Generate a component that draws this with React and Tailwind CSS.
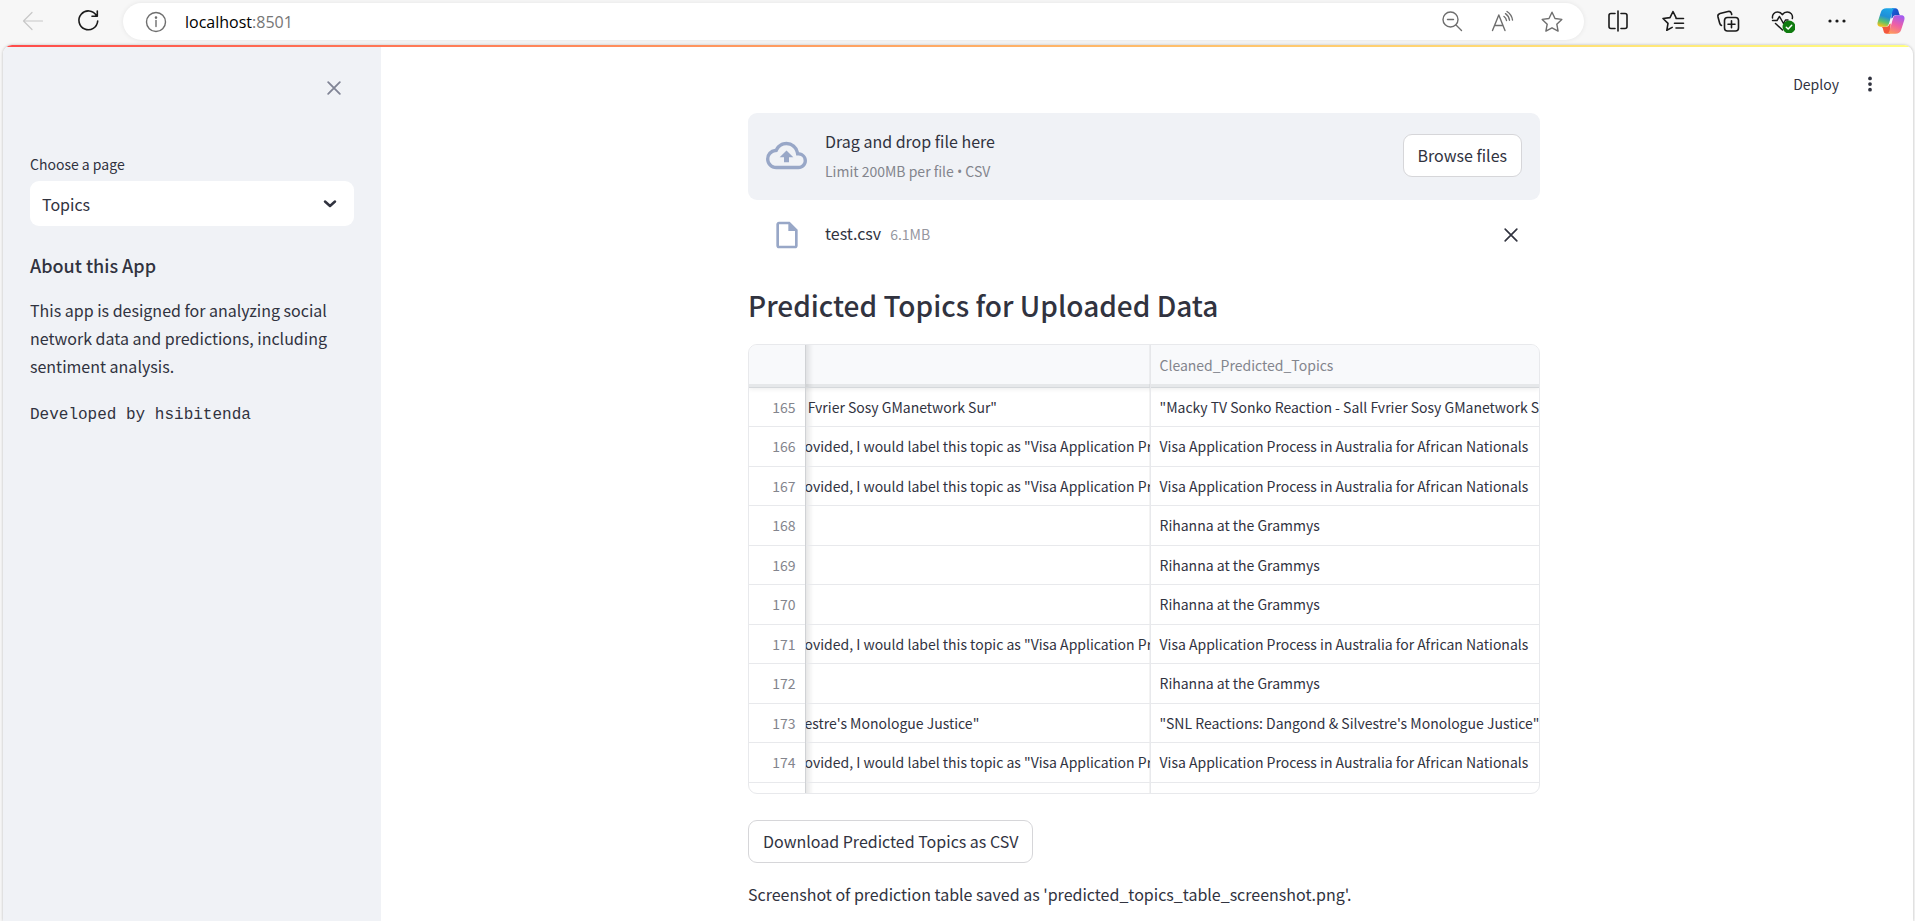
import React from "react";

const UI = "font-['Noto_Sans_CJK_SC','Noto_Sans',sans-serif]";

const LABEL = 'ovided, I would label this topic as "Visa Application Process"';
const VISA = "Visa Application Process in Australia for African Nationals";
const RIHANNA = "Rihanna at the Grammys";

const rows = [
  [165, ' Fvrier Sosy GManetwork Sur"', '"Macky TV Sonko Reaction - Sall Fvrier Sosy GManetwork Sur"'],
  [166, LABEL, VISA],
  [167, LABEL, VISA],
  [168, "", RIHANNA],
  [169, "", RIHANNA],
  [170, "", RIHANNA],
  [171, LABEL, VISA],
  [172, "", RIHANNA],
  [173, 'estre\'s Monologue Justice"', '"SNL Reactions: Dangond & Silvestre\'s Monologue Justice"'],
  [174, LABEL, VISA],
];

function Icon({ children, className = "size-6", sw = 1.2 }) {
  return (
    <svg viewBox="0 0 24 24" fill="none" stroke="currentColor" strokeWidth={sw} strokeLinecap="round" strokeLinejoin="round" className={className} aria-hidden="true">
      {children}
    </svg>
  );
}

const STAR = "M12 2.2l3 6.300 6.800.9-5 4.800 1.300 6.900L12 17.800l-6.100 3.300 1.300-6.900-5-4.800 6.800-.9z";

function Copilot() {
  return (
    <svg viewBox="0 0 28 28" className="size-7" aria-hidden="true">
      <defs>
        <linearGradient id="cpA" x1="0.6" y1="0" x2="0.3" y2="1">
          <stop offset="0" stopColor="#1ea7e8" />
          <stop offset="0.45" stopColor="#1f8fd8" />
          <stop offset="0.75" stopColor="#5fc26a" />
          <stop offset="1" stopColor="#f2c01c" />
        </linearGradient>
        <linearGradient id="cpB" x1="0.7" y1="0" x2="0.3" y2="1">
          <stop offset="0" stopColor="#a45cf0" />
          <stop offset="0.5" stopColor="#ee5fa6" />
          <stop offset="1" stopColor="#ff9a5c" />
        </linearGradient>
        <linearGradient id="cpC" x1="0" y1="0" x2="1" y2="0.6">
          <stop offset="0" stopColor="#1d63e0" />
          <stop offset="1" stopColor="#1745b8" />
        </linearGradient>
      </defs>
      <path d="M15 1.200h3.500c1.500 0 2.400 1 2.800 2.300l.9 3.200c.3 1 1 1.600 2 1.600h-5.500c-1.500 0-2.400.8-2.900 2.200l-1.500 1z" fill="url(#cpC)" />
      <path d="M13 26.800H9.500c-1.500 0-2.400-1-2.800-2.300l-.9-3.200c-.3-1-1-1.600-2-1.600h5.500c1.500 0 2.400-.8 2.900-2.200l1.500-1z" fill="#f4573c" />
      <path d="M9.500 1.200h9c-1.500 0-2.300 1-2.800 2.500L12 16.500c-.6 2-1.700 3.200-3.700 3.200H3.500C.8 19.700 0 17.500.7 15L4 4.700C4.800 2.400 6.500 1.200 9.500 1.200z" fill="url(#cpA)" />
      <path d="M18.500 26.800h-9c1.500 0 2.300-1 2.800-2.500L16 11.500c.6-2 1.700-3.200 3.700-3.200h4.800c2.700 0 3.500 2.200 2.800 4.700L24 23.300c-.8 2.300-2.500 3.500-5.500 3.500z" fill="url(#cpB)" />
    </svg>
  );
}

function BrowserBar() {
  return (
    <header className="flex h-[45px] shrink-0 items-start bg-[#f7f7f7] pr-2.5 text-[#1b1b1b]">
      <div className="flex h-[42px] items-center gap-8 pl-[21px]">
        <button aria-label="Back" disabled className="text-[#c8c8c8]">
          <Icon><path d="M21.500 12H2.500M11 3.500L2.500 12l8.500 8.500" /></Icon>
        </button>
        <button aria-label="Reload">
          <Icon sw={1.6}><path d="M19.400 6.500A9.400 9.400 0 1 0 20.700 12M20.300 2v5.300H15" /></Icon>
        </button>
      </div>
      <div className="mt-[3px] ml-[22px] flex h-[37px] min-w-0 flex-1 items-center rounded-full bg-white pr-5 pl-[21px] text-[#6e6e6e] shadow-[0_0_5px_rgba(0,0,0,0.08)]">
        <button aria-label="Site information">
          <Icon sw={1.4}><circle cx="12" cy="12" r="9.500" /><path d="M12 10.500v6" /><circle cx="12" cy="7.600" r=".6" fill="currentColor" /></Icon>
        </button>
        <div className="ml-[17px] flex-1 font-['Open_Sans',sans-serif] text-[16px] leading-6 text-[#767676]"><span className="text-black">localhost</span>:8501</div>
        <div className="flex items-center gap-[26px]">
          <button aria-label="Zoom out"><Icon sw={1.4}><circle cx="10.500" cy="9.500" r="7.500" /><path d="M16 15l5.500 5.500M7.500 9.500h6" /></Icon></button>
          <button aria-label="Read aloud"><Icon sw={1.4}><path d="M2.500 20.500L8.800 5 15 20.500M4.700 15.500h8.200M14 6.500a6 6 0 0 1 2.500 4M15.500 3.700a9.500 9.500 0 0 1 4 6.500M17 1.500a12 12 0 0 1 5.500 8.500" /></Icon></button>
          <button aria-label="Add to favorites"><Icon sw={1.4}><path d={STAR} /></Icon></button>
        </div>
      </div>
      <div className="flex h-[42px] items-center gap-[31px] pl-[22px]">
        <button aria-label="Split screen"><Icon sw={1.6}><path d="M12 2v20M9 4.500H5a2 2 0 0 0-2 2v11a2 2 0 0 0 2 2h4M15 4.500h4a2 2 0 0 1 2 2v11a2 2 0 0 1-2 2h-4" /></Icon></button>
        <button aria-label="Favorites"><Icon sw={1.6}><path d="M15 8.600L12 2.500 9 8.600l-7 .9 5 4.800-1.200 7 5.400-2.900M15 9.500h7.500M13.500 14.200h9M15 19h7.500" /></Icon></button>
        <button aria-label="Collections"><Icon sw={1.6}><rect x="8.500" y="8.500" width="14" height="13.500" rx="3" /><path d="M15.500 11.800v7M12 15.300h7M5.500 16.500c-1-.5-1.500-1.200-1.800-2.300L2 8C1.600 6.300 2.200 5 4 4.500l8-2c1.800-.4 2.900.3 3.400 1.800l.3 1.200" /></Icon></button>
        <button aria-label="Browser essentials">
          <Icon sw={1.5}><path d="M1.500 9C1 5.500 3.500 3 6.500 3c2.200 0 3.700 1 4.800 2.700C12.500 4 14 3 16.200 3c3.500 0 6 2.800 5.100 6.500M1.500 11.500H6L8.500 7.500l4 7 2-3.500H17M4.500 14.500l7 6.500" /><circle cx="18" cy="18" r="6.500" fill="#0f7b0f" stroke="none" /><path d="M15.300 18.200l1.900 1.800 3.500-3.700" stroke="#fff" /></Icon>
        </button>
        <button aria-label="Settings and more"><Icon><g fill="currentColor" stroke="none"><circle cx="4" cy="12" r="1.600" /><circle cx="11" cy="12" r="1.600" /><circle cx="18" cy="12" r="1.600" /></g></Icon></button>
        <button aria-label="Copilot" className="-ml-1"><Copilot /></button>
      </div>
    </header>
  );
}

function Sidebar() {
  return (
    <aside className="w-[378px] shrink-0 bg-[#f0f2f6] px-[27px] text-[#31333f]">
      <div className="flex justify-end pt-[31px] pr-[10px]">
        <button aria-label="Close sidebar" className="text-[#808495]"><Icon className="size-5" sw={2.2}><path d="M5 5l14 14M19 5L5 19" /></Icon></button>
      </div>
      <label htmlFor="page" className="mt-[54px] block text-[14px] leading-6">Choose a page</label>
      <div className="relative mt-[5px]">
        <select id="page" defaultValue="Topics" className="h-[45px] w-full appearance-none rounded-[9px] bg-white px-3 text-[16px] leading-6">
          <option>Topics</option>
        </select>
        <Icon className="pointer-events-none absolute top-[11px] right-3 size-6" sw={2.5}><path d="M7 9.500l5 4.500 5-4.500" /></Icon>
      </div>
      <h3 className="mt-[23px] text-[18px] leading-8 font-medium">About this App</h3>
      <p className="mt-[15px] text-[16px] leading-7">This app is designed for analyzing social network data and predictions, including sentiment analysis.</p>
      <p className="mt-[23px] font-['Liberation_Mono',monospace] text-[16px] leading-6">Developed by hsibitenda</p>
    </aside>
  );
}

function Uploader() {
  return (
    <section>
      <div className="flex h-[87px] items-center rounded-[9px] bg-[#f0f2f6] px-[18px] pb-0.5">
        <svg viewBox="0 0 24 24" fill="#98a7c7" className="size-[41px]" aria-hidden="true">
          <path d="M19.350 10.040A7.490 7.490 0 0 0 12 4C9.110 4 6.600 5.640 5.350 8.040A5.994 5.994 0 0 0 0 14c0 3.310 2.690 6 6 6h13c2.760 0 5-2.240 5-5 0-2.640-2.050-4.780-4.650-4.960zM19 18H6c-2.210 0-4-1.790-4-4 0-2.050 1.530-3.760 3.560-3.970l1.070-.11.5-.95A5.469 5.469 0 0 1 12 6c2.620 0 4.880 1.860 5.390 4.430l.3 1.500 1.530.11A2.980 2.980 0 0 1 22 15c0 1.650-1.350 3-3 3zM8 13h2.550v3h2.900v-3H16l-4-4z" />
        </svg>
        <div className="ml-[18px] flex-1">
          <div className="text-[16px] leading-7 text-[#31333f]">Drag and drop file here</div>
          <div className="mt-1 text-[14px] leading-6 text-[#83858d]">Limit 200MB per file <span className="font-['Open_Sans',sans-serif]">•</span> CSV</div>
        </div>
        <button className="h-[43px] rounded-[9px] border border-[#d6d6d9] bg-white px-3.5 pb-0.5 text-[16px] leading-6 text-[#31333f]">Browse files</button>
      </div>
      <div className="flex h-[70px] items-center pr-[19px] pl-[23px]">
        <svg viewBox="0 0 24 24" fill="#98a7c7" className="size-8" aria-hidden="true">
          <path d="M6 2c-1.100 0-1.990.9-1.990 2L4 20c0 1.100.89 2 1.990 2H18c1.100 0 2-.9 2-2V8l-6-6H6zm0 18V4h7v5h5v11H6z" />
        </svg>
        <div className="ml-[22px] flex flex-1 items-baseline gap-[9px] pb-1">
          <span className="text-[16px] leading-6 text-[#31333f]">test.csv</span>
          <span className="text-[14px] leading-6 text-[#96979f]">6.1MB</span>
        </div>
        <button aria-label="Remove test.csv" className="text-[#31333f]"><Icon className="size-5" sw={2}><path d="M5 5l14 14M19 5L5 19" /></Icon></button>
      </div>
    </section>
  );
}

function TopicsTable() {
  return (
    <div className="mt-[22px] h-[450px] overflow-hidden rounded-[9px] border border-[#e8e9ec]">
      <table className="w-full table-fixed border-collapse text-[14px] leading-6 text-[#31333f]">
        <colgroup><col className="w-[56px]" /><col className="w-[345px]" /><col /></colgroup>
        <thead>
          <tr className="h-[42px] border-b border-[#d5d8db] bg-[#f8f9fb] shadow-[inset_0_-3px_0_#e6e8ea,0_2px_5px_rgba(0,0,0,0.08)]">
            <th className="border-r border-[#d0d2d5]" />
            <th className="border-r border-[#e6e7ea] bg-linear-to-r from-black/10 to-transparent to-[8px]" />
            <th className="px-[9px] pt-0 pb-0.5 text-left font-normal text-[#83858d]">Cleaned_Predicted_Topics</th>
          </tr>
        </thead>
        <tbody>
          {rows.map(([n, left, right]) => (
            <tr key={n} className="h-[39px] border-b border-[#e8e9ec] even:h-10">
              <td className="border-r border-[#d0d2d5] p-0 pr-[9px] text-right text-[#83858d]">{n}</td>
              <td className="overflow-hidden border-r border-[#e8e9ec] bg-linear-to-r from-black/10 to-transparent to-[8px] p-0 whitespace-pre"><span className="-ml-px">{left}</span></td>
              <td className="overflow-hidden p-0 pl-[9px] whitespace-nowrap">{right}</td>
            </tr>
          ))}
          <tr className="h-[39px]">
            <td className="border-r border-[#d0d2d5]" />
            <td className="border-r border-[#e8e9ec] bg-linear-to-r from-black/10 to-transparent to-[8px]" />
            <td />
          </tr>
        </tbody>
      </table>
    </div>
  );
}

export default function App() {
  return (
    <div className={`flex h-screen flex-col overflow-hidden bg-[#f7f7f7] ${UI}`}>
      <BrowserBar />
      <div className="mr-0.5 ml-[3px] flex min-h-0 flex-1 flex-col overflow-hidden rounded-t-[9px] bg-white shadow-[0_0_3px_rgba(0,0,0,0.25)]">
        <div className="h-0.5 shrink-0 bg-linear-to-r from-[#ff4b4b] to-[#fffd80]" />
        <div className="flex min-h-0 flex-1">
          <Sidebar />
          <main className="flex min-w-0 flex-1 flex-col pr-1.5 text-[#31333f]">
            <div className="flex h-[66px] shrink-0 items-center justify-end gap-[22px] pt-2 pr-7">
              <button className="text-[14px] leading-6">Deploy</button>
              <button aria-label="Main menu"><Icon className="size-[18px]"><g fill="currentColor" stroke="none"><circle cx="12" cy="4.500" r="2.500" /><circle cx="12" cy="12" r="2.500" /><circle cx="12" cy="19.500" r="2.500" /></g></Icon></button>
            </div>
            <div className="mx-auto w-full max-w-[792px]">
              <Uploader />
              <h2 className="mt-[18px] text-[28px] leading-[34px] font-medium">Predicted Topics for Uploaded Data</h2>
              <TopicsTable />
              <button className="mt-[26px] h-[43px] rounded-[9px] border border-[#d6d6d9] bg-white px-3.5 pb-0.5 text-[16px] leading-6">Download Predicted Topics as CSV</button>
              <p className="mt-[17px] text-[16px] leading-7">Screenshot of prediction table saved as 'predicted_topics_table_screenshot.png'.</p>
            </div>
          </main>
        </div>
      </div>
    </div>
  );
}
